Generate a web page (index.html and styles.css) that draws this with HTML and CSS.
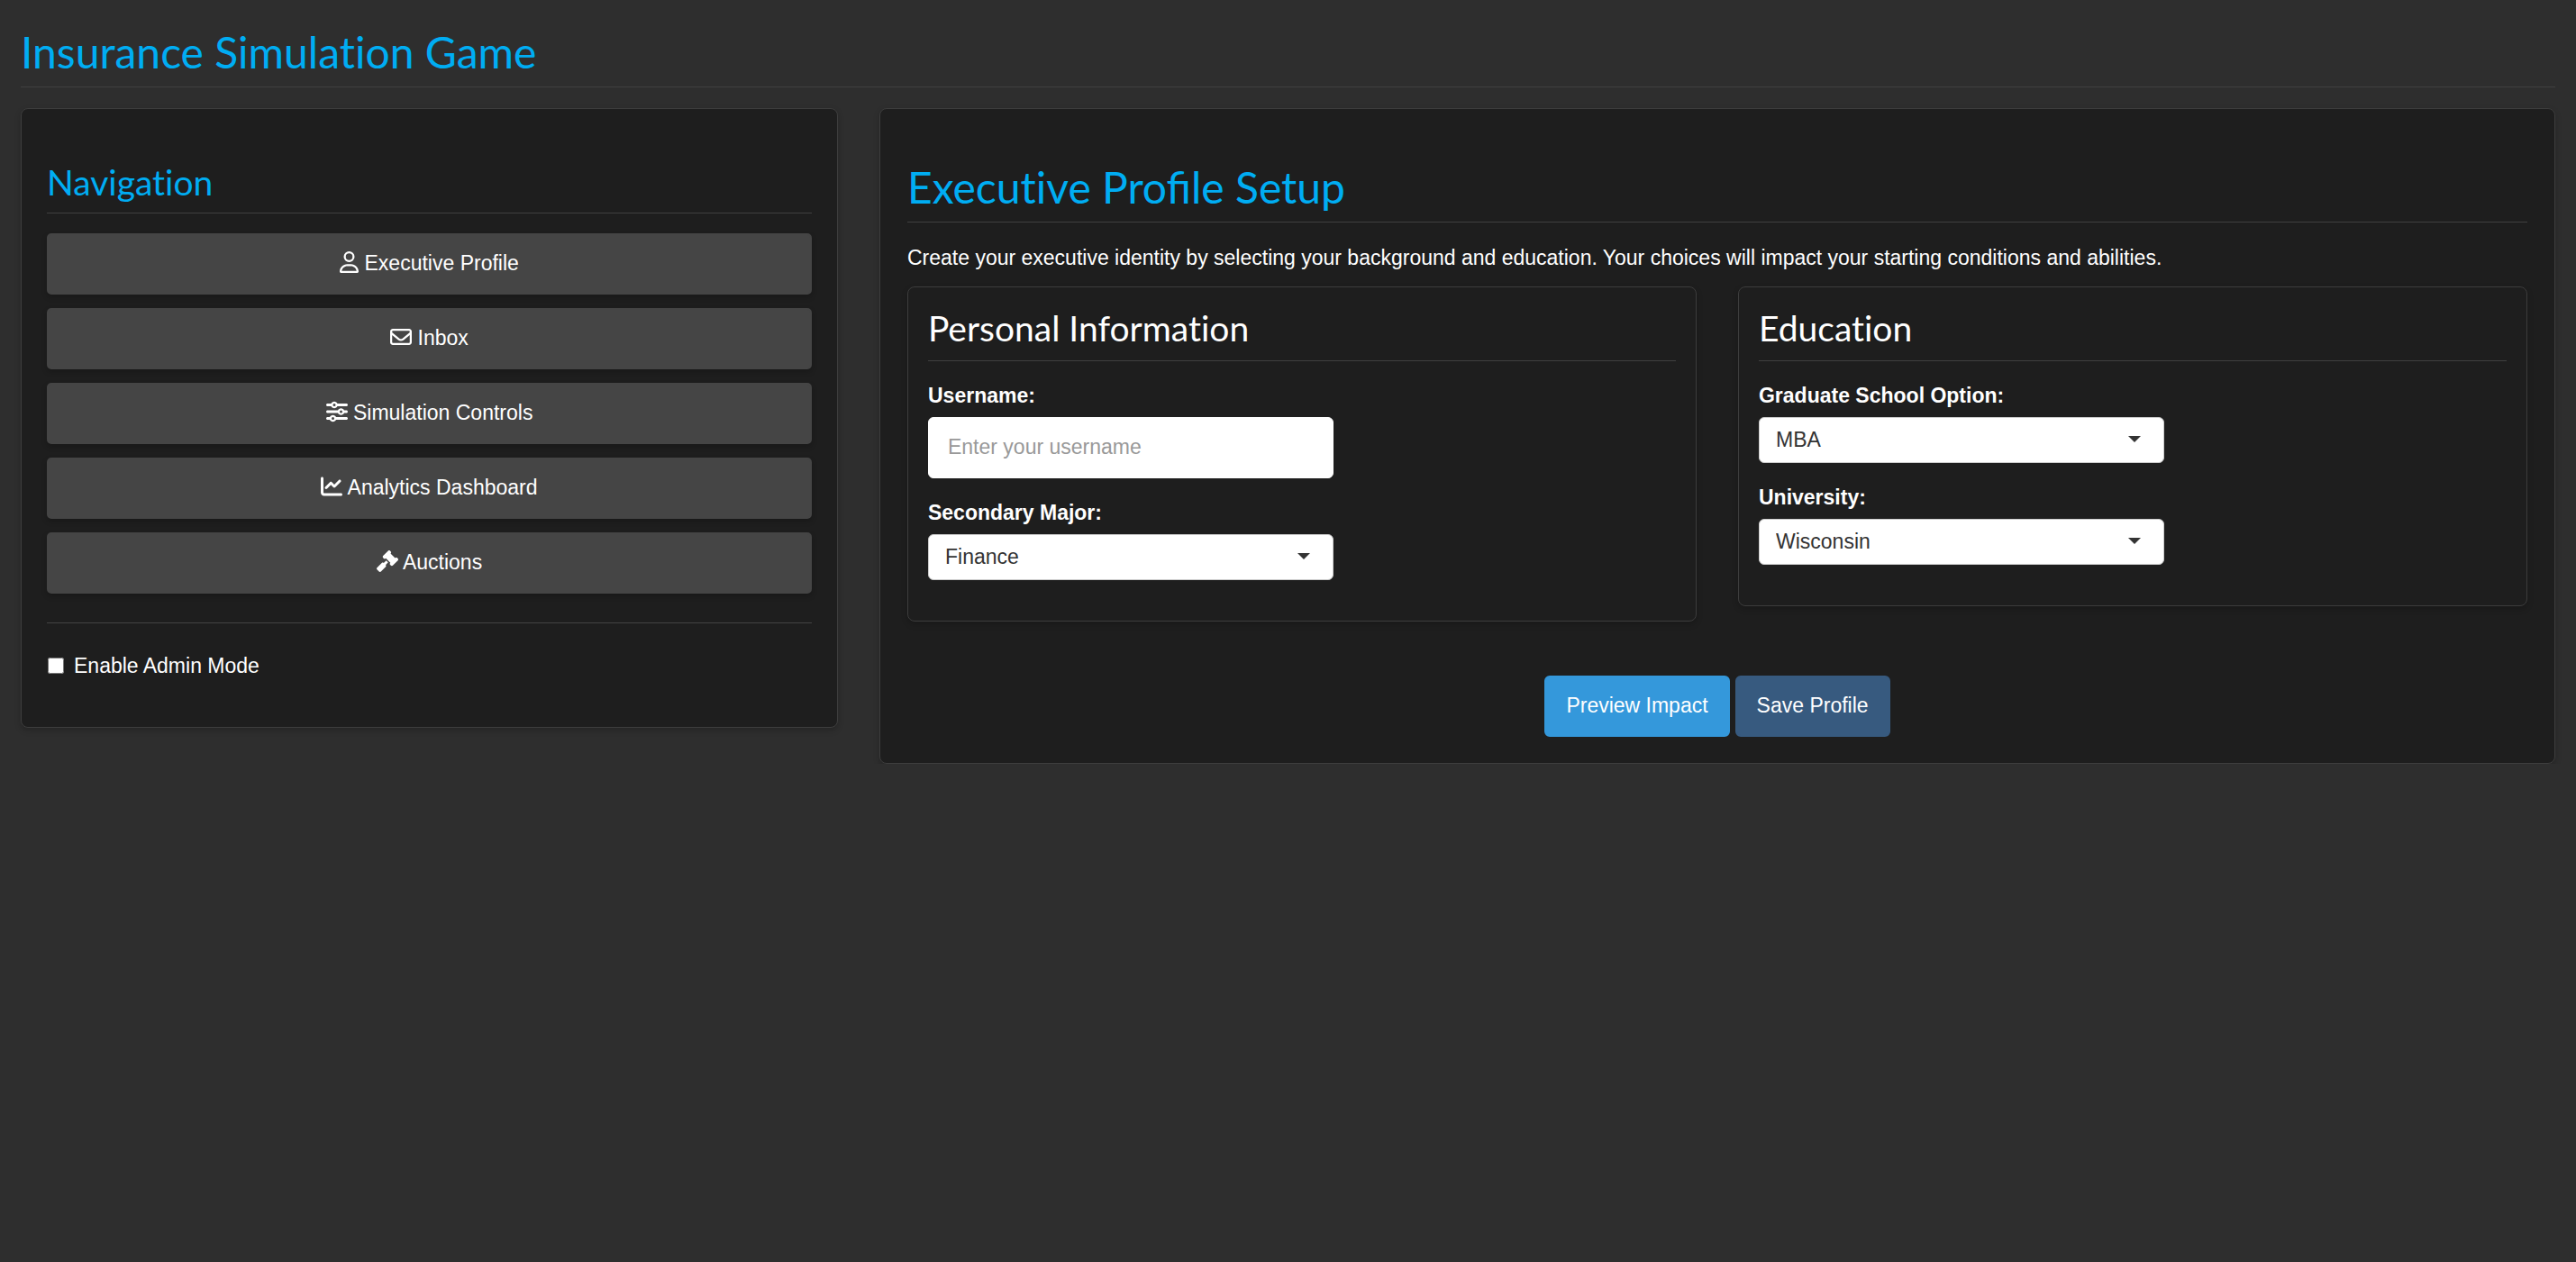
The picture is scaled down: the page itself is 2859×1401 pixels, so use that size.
FILE: index.html
```html
<!DOCTYPE html>
<html lang="en">
<head>
<meta charset="utf-8">
<title>Insurance Simulation Game</title>
<meta name="viewport" content="width=device-width, initial-scale=1">
<link rel="stylesheet" href="styles.css">
</head>
<body>
<header class="page-header">
  <h1 class="title title-accent">Insurance Simulation Game</h1>
</header>
<div class="layout">
  <div class="sidebar">
    <nav class="panel panel-nav" aria-label="Main">
      <h2 class="subtitle title-accent">Navigation</h2>
      <div class="nav-list">
        <button class="btn btn-nav" type="button"><svg class="icon icon-narrow" viewBox="0 0 448 512" aria-hidden="true"><path d="M304 128a80 80 0 1 0 -160 0 80 80 0 1 0 160 0zM96 128a128 128 0 1 1 256 0A128 128 0 1 1 96 128zM49.300 464l349.500 0c-8.900-63.300-63.300-112-129-112l-91.400 0c-65.700 0-120.100 48.700-129 112zM0 482.300C0 383.800 79.800 304 178.300 304l91.400 0C368.200 304 448 383.800 448 482.300c0 16.400-13.300 29.700-29.700 29.700L29.700 512C13.300 512 0 498.700 0 482.300z"/></svg> Executive Profile</button>
        <button class="btn btn-nav" type="button"><svg class="icon" viewBox="0 0 512 512" aria-hidden="true"><path d="M64 112c-8.800 0-16 7.200-16 16l0 22.100L220.500 291.700c20.700 17 50.400 17 71.100 0L464 150.100l0-22.100c0-8.800-7.200-16-16-16L64 112zM48 212.200L48 384c0 8.800 7.200 16 16 16l384 0c8.800 0 16-7.200 16-16l0-171.800L322 328.800c-38.400 31.500-93.700 31.500-132 0L48 212.200zM0 128C0 92.700 28.700 64 64 64l384 0c35.300 0 64 28.700 64 64l0 256c0 35.300-28.700 64-64 64L64 448c-35.300 0-64-28.700-64-64L0 128z"/></svg> Inbox</button>
        <button class="btn btn-nav" type="button"><svg class="icon" viewBox="0 0 512 512" aria-hidden="true"><path d="M0 416c0 17.700 14.300 32 32 32l54.700 0c12.300 28.300 40.500 48 73.300 48s61-19.700 73.300-48L480 448c17.700 0 32-14.300 32-32s-14.300-32-32-32l-246.700 0c-12.300-28.300-40.500-48-73.300-48s-61 19.700-73.300 48L32 384c-17.700 0-32 14.300-32 32zm128 0a32 32 0 1 1 64 0 32 32 0 1 1 -64 0zM320 256a32 32 0 1 1 64 0 32 32 0 1 1 -64 0zm32-80c-32.800 0-61 19.700-73.300 48L32 224c-17.700 0-32 14.300-32 32s14.300 32 32 32l246.700 0c12.300 28.300 40.500 48 73.300 48s61-19.700 73.300-48l54.700 0c17.700 0 32-14.300 32-32s-14.300-32-32-32l-54.700 0c-12.300-28.300-40.500-48-73.300-48zM192 128a32 32 0 1 1 0-64 32 32 0 1 1 0 64zm73.300-64C253 35.700 224.800 16 192 16s-61 19.700-73.300 48L32 64C14.300 64 0 78.300 0 96s14.300 32 32 32l86.700 0c12.300 28.300 40.500 48 73.300 48s61-19.700 73.300-48L480 128c17.700 0 32-14.300 32-32s-14.300-32-32-32L265.300 64z"/></svg> Simulation Controls</button>
        <button class="btn btn-nav" type="button"><svg class="icon" viewBox="0 0 512 512" aria-hidden="true"><path d="M64 64c0-17.700-14.300-32-32-32S0 46.300 0 64L0 400c0 44.200 35.800 80 80 80l400 0c17.700 0 32-14.300 32-32s-14.300-32-32-32L80 416c-8.800 0-16-7.200-16-16L64 64zm406.600 86.600c12.500-12.500 12.500-32.800 0-45.300s-32.800-12.500-45.300 0L320 210.700l-57.400-57.400c-12.500-12.500-32.800-12.500-45.300 0l-112 112c-12.500 12.500-12.500 32.800 0 45.300s32.800 12.500 45.300 0L240 221.300l57.400 57.400c12.500 12.500 32.800 12.500 45.300 0l128-128z"/></svg> Analytics Dashboard</button>
        <button class="btn btn-nav" type="button"><svg class="icon" viewBox="0 0 512 512" aria-hidden="true"><path d="M318.600 9.400c-12.500-12.500-32.800-12.500-45.300 0l-120 120c-12.500 12.500-12.500 32.800 0 45.300l16 16c12.500 12.500 32.800 12.500 45.300 0l4-4L325.400 293.400l-4 4c-12.500 12.500-12.500 32.800 0 45.300l16 16c12.500 12.500 32.800 12.500 45.300 0l120-120c12.500-12.500 12.500-32.800 0-45.300l-16-16c-12.500-12.500-32.800-12.500-45.300 0l-4 4L330.600 74.600l4-4c12.500-12.500 12.500-32.800 0-45.300l-16-16zm-152 288c-12.500-12.500-32.800-12.500-45.300 0l-112 112c-12.500 12.500-12.500 32.800 0 45.300l48 48c12.500 12.500 32.800 12.500 45.300 0l112-112c12.500-12.500 12.500-32.800 0-45.300l-1.400-1.400L272 285.300 226.700 240 168 298.700l-1.400-1.400z"/></svg> Auctions</button>
      </div>
      <hr class="divider">
      <label class="check"><input class="check-box" type="checkbox"> Enable Admin Mode</label>
    </nav>
  </div>
  <main class="content">
    <section class="panel panel-main">
      <h2 class="title title-accent">Executive <span class="ligatures">Profile</span> Setup</h2>
      <p class="intro">Create your executive identity by selecting your background and education. Your choices will impact your starting conditions and abilities.</p>
      <form class="profile-form">
        <div class="cards">
          <section class="card">
            <h3 class="subtitle">Personal Information</h3>
            <div class="field">
              <label class="label" for="username">Username:</label>
              <input class="control control-text" id="username" type="text" placeholder="Enter your username">
            </div>
            <div class="field">
              <label class="label" for="major">Secondary Major:</label>
              <div class="select"><select class="control control-select" id="major"><option>Finance</option></select></div>
            </div>
          </section>
          <section class="card">
            <h3 class="subtitle">Education</h3>
            <div class="field">
              <label class="label" for="school">Graduate School Option:</label>
              <div class="select"><select class="control control-select" id="school"><option>MBA</option></select></div>
            </div>
            <div class="field">
              <label class="label" for="university">University:</label>
              <div class="select"><select class="control control-select" id="university"><option>Wisconsin</option></select></div>
            </div>
          </section>
        </div>
        <div class="actions">
          <button class="btn btn-preview" type="button">Preview Impact</button>
          <button class="btn btn-save" type="button">Save Profile</button>
        </div>
      </form>
    </section>
  </main>
</div>
</body>
</html>
```
FILE: styles.css
```css
* {
  box-sizing: border-box;
}

body {
  margin: 0;
  background: #2e2e2e;
  color: #fff;
  font-family: "Liberation Sans", Arial, sans-serif;
  font-size: 23px;
  line-height: 32px;
}

.page-header {
  padding: 31px 23px 23px;
}

.title,
.subtitle {
  margin: 0;
  padding-bottom: 12px;
  border-bottom: 1px solid #404040;
  font-family: Lato, "Liberation Sans", sans-serif;
  font-variant-ligatures: none;
  font-weight: 400;
}

.title {
  font-size: 48px;
  line-height: 53px;
}

.subtitle {
  font-size: 39px;
  line-height: 43px;
}

.title-accent {
  color: #00adf3;
}

.ligatures {
  font-variant-ligatures: normal;
}

.layout {
  display: flex;
  align-items: flex-start;
}

.sidebar {
  width: 33.333%;
  padding: 0 23px;
}

.content {
  flex: 1;
  padding: 0 23px;
}

.panel,
.card {
  border: 1px solid #3d3d3d;
  border-radius: 8px;
  background: #1e1e1e;
  box-shadow: 0 3px 7px rgba(0, 0, 0, 0.2);
}

.panel-nav {
  padding: 60px 28px 52px;
}

.panel-main {
  padding: 60px 30px 29px;
}

.nav-list {
  display: flex;
  flex-direction: column;
  gap: 15px;
  margin-top: 22px;
}

.btn {
  padding: 15px 22px 17px;
  border: 2px solid transparent;
  border-radius: 6px;
  color: #fff;
  font: inherit;
  cursor: pointer;
}

.btn-nav {
  border-color: #454545;
  border-radius: 5px;
  background: #454545;
  box-shadow: 0 3px 6px rgba(0, 0, 0, 0.2);
}

.icon {
  width: 24px;
  height: 24px;
  fill: currentColor;
  vertical-align: -3px;
}

.icon-narrow {
  width: 21px;
}

.divider {
  margin: 32px 0 31px;
  border: 0;
  border-top: 1px solid #444;
}

.check {
  display: flex;
  align-items: center;
  gap: 11px;
}

.check-box {
  width: 18px;
  height: 18px;
  margin: 0 0 0 1px;
}

.intro {
  margin: 23px 0 16px;
}

.cards {
  display: grid;
  grid-template-columns: 1fr 1fr;
  align-items: start;
  gap: 46px;
}

.card {
  padding: 24px 22px 23px;
}

.card .subtitle {
  padding-bottom: 14px;
}

.field {
  margin: 22px 0;
}

.label {
  display: block;
  margin-bottom: 8px;
  font-weight: 700;
}

.select {
  position: relative;
  width: 450px;
  max-width: 100%;
}

.select::after {
  position: absolute;
  top: 21px;
  right: 26px;
  width: 14px;
  height: 7px;
  background: #333;
  clip-path: polygon(0 0, 100% 0, 50% 100%);
  content: "";
  pointer-events: none;
}

.control {
  display: block;
  width: 450px;
  max-width: 100%;
  border: 1px solid #ccc;
  border-radius: 6px;
  background: #fff;
  color: #333;
  font: inherit;
}

.control-text {
  height: 68px;
  padding: 0 21px 2px;
  border-color: #fff;
}

.control-text::placeholder {
  color: #999;
}

.control-select {
  height: 51px;
  padding: 0 18px 2px;
  appearance: none;
}

.actions {
  display: flex;
  justify-content: center;
  gap: 6px;
  margin-top: 60px;
}

.btn-preview {
  border-color: #3498db;
  background: #3498db;
}

.btn-save {
  border-color: #375a7f;
  background: #375a7f;
}
```
